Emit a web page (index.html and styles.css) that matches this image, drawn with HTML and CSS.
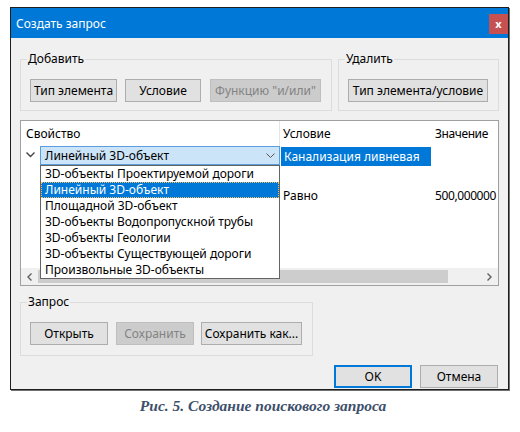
FILE: index.html
```html
<!DOCTYPE html>
<html lang="ru">
<head>
    <meta charset="UTF-8">
    <title>Создать запрос</title>
    <link rel="stylesheet" href="styles.css">
</head>
<body>
    <div class="page">
        <div class="window">
            <div class="titlebar">
                <span class="title">Создать запрос</span>
                <span class="close">x</span>
            </div>
            <div class="client">
                <div class="groups">
                    <fieldset class="group group-add">
                        <legend>Добавить</legend>
                        <button class="btn w-type">Тип элемента</button>
                        <button class="btn w-cond">Условие</button>
                        <button class="btn w-func" disabled>Функцию "и/или"</button>
                    </fieldset>
                    <fieldset class="group group-del">
                        <legend>Удалить</legend>
                        <button class="btn w-del">Тип элемента/условие</button>
                    </fieldset>
                </div>

                <!-- таблица условий -->
                <div class="grid-box">
                    <div class="grid-row grid-head">
                        <div class="cell cell-prop">Свойство</div>
                        <div class="cell cell-cond">Условие</div>
                        <div class="cell cell-val">Значение</div>
                    </div>
                    <div class="grid-row row-main">
                        <div class="cell cell-prop">
                            <span class="tree-toggle">
                                <svg width="9" height="6" viewBox="0 0 9 6"><path d="M0.5 0.5 L4.5 4.5 L8.5 0.5" fill="none" stroke="#444" stroke-width="1.4"/></svg>
                            </span>
                            <span class="combo">
                                <span class="combo-text">Линейный 3D-объект</span>
                                <svg class="combo-arrow" width="9" height="5" viewBox="0 0 9 5"><path d="M0.5 0.5 L4.5 4.5 L8.5 0.5" fill="none" stroke="#555" stroke-width="1"/></svg>
                            </span>
                        </div>
                        <div class="cell cell-cond"><span class="cell-selected">Канализация ливневая</span></div>
                        <div class="cell cell-val"></div>
                    </div>
                    <div class="grid-row">
                        <div class="cell cell-prop"></div>
                        <div class="cell cell-cond"></div>
                        <div class="cell cell-val"></div>
                    </div>
                    <div class="grid-row">
                        <div class="cell cell-prop"></div>
                        <div class="cell cell-cond">Равно</div>
                        <div class="cell cell-val">500,000000</div>
                    </div>

                    <div class="hscroll">
                        <span class="scroll-arrow">
                            <svg width="5" height="8" viewBox="0 0 5 8"><path d="M4.5 0.5 L1 4 L4.5 7.5" fill="none" stroke="#606060" stroke-width="1.4"/></svg>
                        </span>
                        <span class="scroll-thumb"></span>
                        <span class="scroll-track"></span>
                        <span class="scroll-arrow">
                            <svg width="5" height="8" viewBox="0 0 5 8"><path d="M0.5 0.5 L4 4 L0.5 7.5" fill="none" stroke="#606060" stroke-width="1.4"/></svg>
                        </span>
                    </div>

                    <!-- раскрытый список -->
                    <ul class="dropdown">
                        <li>3D-объекты Проектируемой дороги</li>
                        <li class="selected">Линейный 3D-объект</li>
                        <li>Площадной 3D-объект</li>
                        <li>3D-объекты Водопропускной трубы</li>
                        <li>3D-объекты Геологии</li>
                        <li>3D-объекты Существующей дороги</li>
                        <li>Произвольные 3D-объекты</li>
                    </ul>
                </div>

                <fieldset class="group group-query">
                    <legend>Запрос</legend>
                    <button class="btn w-open">Открыть</button>
                    <button class="btn w-save" disabled>Сохранить</button>
                    <button class="btn w-saveas">Сохранить как...</button>
                </fieldset>

                <div class="dialog-buttons">
                    <button class="btn btn-default">OK</button>
                    <button class="btn">Отмена</button>
                </div>
            </div>
        </div>
        <p class="caption">Рис. 5. Создание поискового запроса</p>
    </div>
</body>
</html>
```

FILE: styles.css
```css
body {
    margin: 0;
    background: #fff;
    font-family: "Noto Sans", "Open Sans", sans-serif;
    font-size: 12px;
    color: #000;
}
.page {
    padding: 7px 0 0 10px;
}
.window {
    width: 499px;
    box-sizing: border-box;
    border: 1px solid #1e1e1e;
    box-shadow: 1px 1px 0 #707070;
    background: #f0f0f0;
}
.titlebar {
    height: 30px;
    background: #0078d7;
    color: #fff;
    display: flex;
    align-items: center;
    padding-left: 5px;
}
.title {
    font-size: 12px;
}
.close {
    margin-left: auto;
    align-self: flex-start;
    margin-top: 6px;
    width: 19px;
    height: 20px;
    background: #c75050;
    color: #fff;
    font-weight: bold;
    font-size: 11px;
    line-height: 19px;
    text-align: center;
}
.client {
    padding: 13px 9px 1px 9px;
}
.groups {
    display: flex;
    gap: 6px;
}
.group {
    margin: 0;
    min-width: 0;
    box-sizing: border-box;
    border: 1px solid #dcdcdc;
    padding: 12px 9px 8px;
    display: flex;
}
.group legend {
    padding: 0 1px;
    margin-left: -3px;
    line-height: 16px;
}
.group-add {
    width: 312px;
}
.group-del {
    width: 161px;
}
.btn {
    height: 23px;
    box-sizing: border-box;
    border: 1px solid #adadad;
    background: #e1e1e1;
    font-family: inherit;
    font-size: 12px;
    color: #000;
    padding: 0;
    margin: 0;
}
.btn:disabled {
    background: #cccccc;
    border-color: #bfbfbf;
    color: #838383;
}
.w-type { width: 87px; margin-right: 8px; }
.w-cond { width: 76px; margin-right: 9px; }
.w-func { width: 111px; }
.w-del { width: 140px; }
.w-open { width: 78px; margin-right: 8px; }
.w-save { width: 78px; margin-right: 7px; }
.w-saveas { width: 101px; }

/* таблица */
.grid-box {
    position: relative;
    margin-top: 9px;
    width: 479px;
    height: 166px;
    box-sizing: border-box;
    border: 1px solid #a0a0a0;
    background: #fff;
    display: flex;
    flex-direction: column;
    overflow: hidden;
}
.grid-row {
    display: grid;
    grid-template-columns: 259px 151px 1fr;
    height: 20px;
    line-height: 20px;
    white-space: nowrap;
}
.grid-head {
    height: 25px;
    line-height: 25px;
}
.grid-head .cell-prop {
    border-right: 1px solid #e5e5e5;
}
.cell-prop {
    padding-left: 5px;
}
.cell-cond {
    padding-left: 3px;
}
.cell-val {
    padding-left: 4px;
    letter-spacing: -0.4px;
}
.row-main .cell-prop {
    padding-left: 0;
    display: flex;
}
.row-main .cell-cond {
    padding-left: 0;
}
.tree-toggle {
    width: 19px;
    display: flex;
    align-items: center;
    justify-content: center;
    padding-bottom: 2px;
    box-sizing: border-box;
}
.combo {
    width: 240px;
    height: 19px;
    box-sizing: border-box;
    border: 1px solid #5a9ee0;
    background: #cce4f7;
    display: flex;
    align-items: center;
    padding: 0 4px;
    line-height: 17px;
}
.combo-arrow {
    margin-left: auto;
}
.cell-selected {
    display: block;
    margin: 1px 0 0 1px;
    height: 19px;
    line-height: 19px;
    padding-left: 3px;
    background: #0078d7;
    color: #fff;
}
.hscroll {
    margin-top: auto;
    height: 17px;
    display: flex;
    background: #f0f0f0;
}
.scroll-arrow {
    width: 17px;
    display: flex;
    align-items: center;
    justify-content: center;
}
.scroll-thumb {
    width: 410px;
    margin: 2px 0;
    background: #cdcdcd;
}
.scroll-track {
    flex: 1;
}
.dropdown {
    position: absolute;
    left: 19px;
    top: 44px;
    width: 240px;
    margin: 0;
    padding: 0;
    list-style: none;
    box-sizing: border-box;
    border: 1px solid #646464;
    background: #fff;
}
.dropdown li {
    height: 16px;
    line-height: 16px;
    padding-left: 4px;
    white-space: nowrap;
}
.dropdown li.selected {
    background: #0078d7;
    color: #fff;
    outline: 1px dotted #f5c060;
    outline-offset: -1px;
}

.group-query {
    margin-top: 8px;
    width: 293px;
    padding-bottom: 10px;
}
.dialog-buttons {
    display: flex;
    justify-content: flex-end;
    gap: 8px;
    margin-top: 9px;
    margin-right: 1px;
}
.dialog-buttons .btn {
    width: 78px;
}
.btn-default {
    border: 2px solid #0078d7;
}
.caption {
    margin: 7px 0 0;
    padding-left: 6px;
    width: 494px;
    text-align: center;
    font-family: "Liberation Serif", serif;
    font-weight: bold;
    font-style: italic;
    font-size: 15.5px;
    line-height: 18px;
    color: #3e4f6b;
}
```
